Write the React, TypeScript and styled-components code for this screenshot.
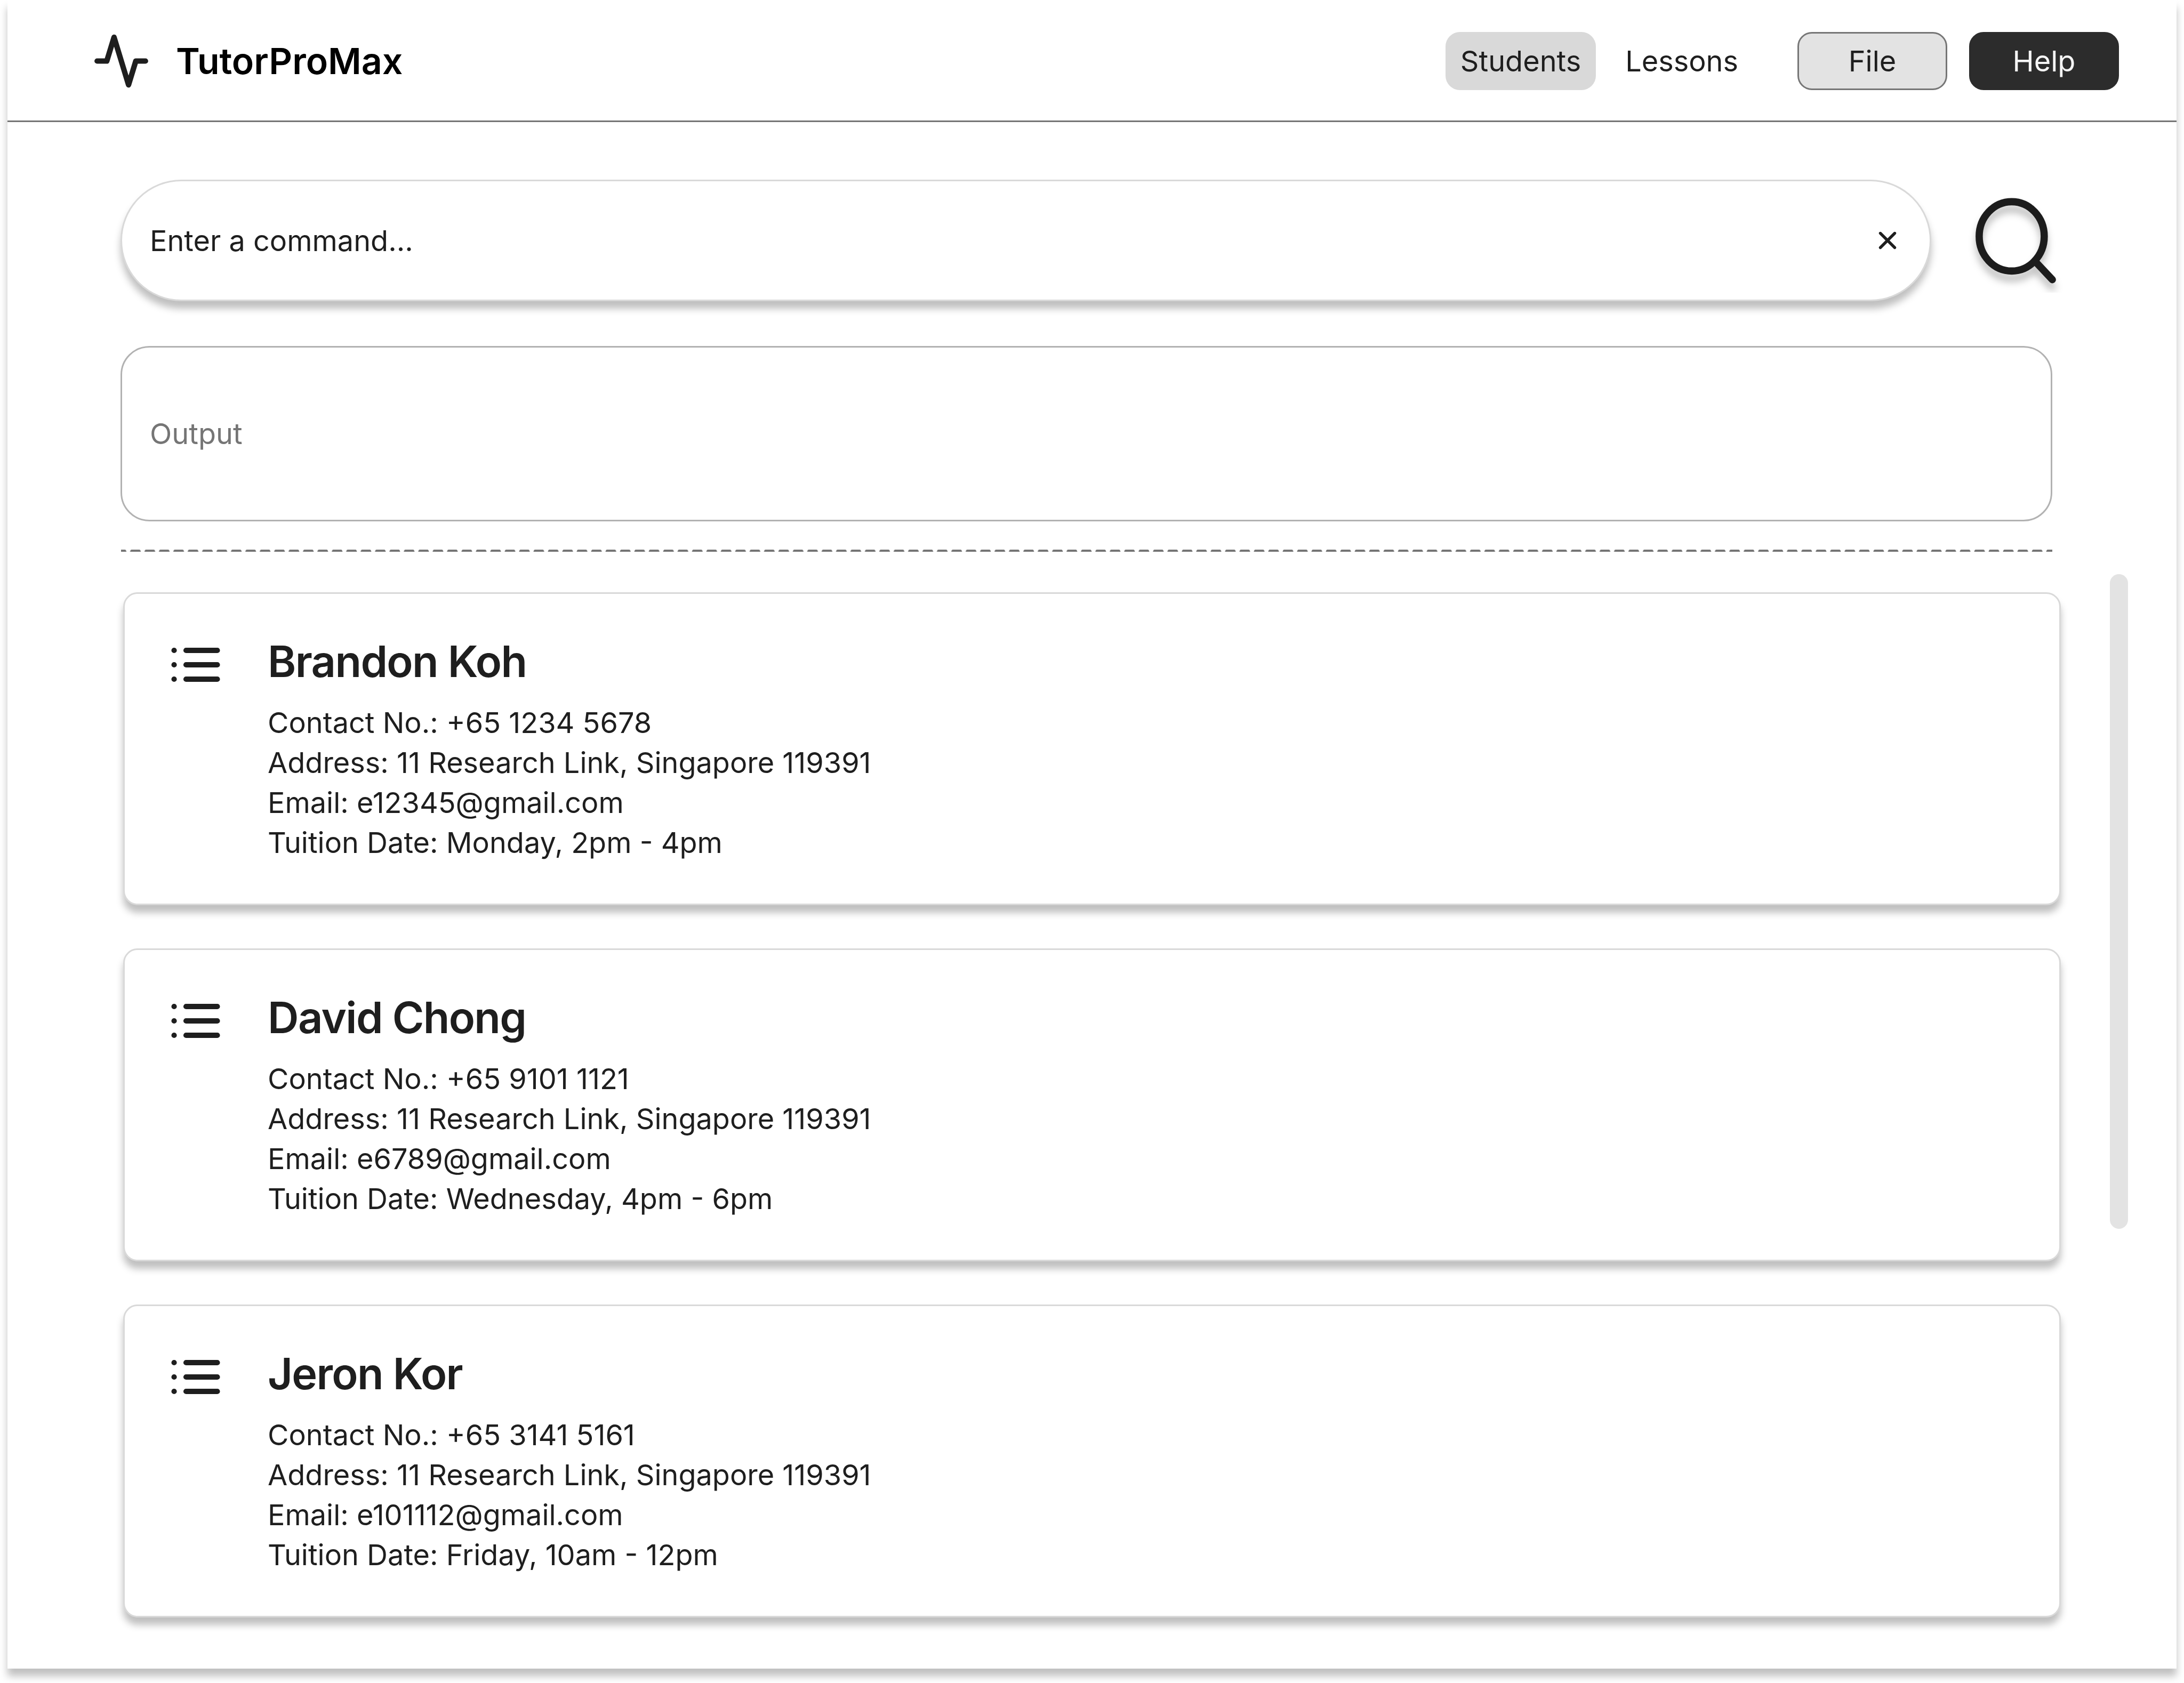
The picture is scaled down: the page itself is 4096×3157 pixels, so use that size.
import React from "react";
import styled, { createGlobalStyle, css } from "styled-components";

const ink = "#1e1e1e";
const line = "#d9d9d9";
const muted = "#757575";
const softShadow = "0 14px 14px rgba(0, 0, 0, 0.25)";

const GlobalStyle = createGlobalStyle`
  *, *::before, *::after { box-sizing: border-box; }
  body {
    margin: 0;
    background: #ffffff;
    color: ${ink};
    font-family: Inter, "Liberation Sans", sans-serif;
    font-size: 54px;
    line-height: 75px;
  }
  svg { display: block; flex: none; }
`;

const Page = styled.div`
  padding: 0 14px 27px;
`;

const Frame = styled.div`
  background: #ffffff;
  box-shadow: ${softShadow};
`;

const Header = styled.header`
  display: flex;
  align-items: center;
  justify-content: space-between;
  padding: 55px 108px 52px 159px;
  border-bottom: 3px solid ${muted};
`;

const Brand = styled.div`
  display: flex;
  align-items: center;
  gap: 48px;
  color: #000000;
  font-size: 68px;
  font-weight: 600;
`;

const Actions = styled.div`
  display: flex;
  align-items: center;
  gap: 83px;
`;

const Nav = styled.nav`
  display: flex;
  gap: 27px;
`;

const NavLink = styled.a<{ $active?: boolean }>`
  padding: 17px 28px;
  border-radius: 27px;
  background: ${({ $active }) => ($active ? line : "transparent")};
  color: ${ink};
  text-decoration: none;
`;

const ButtonGroup = styled.div`
  display: flex;
  gap: 41px;
`;

const HeaderButton = styled.button<{ $variant: "neutral" | "primary" }>`
  width: 281px;
  height: 109px;
  padding: 0;
  border-radius: 27px;
  font: inherit;
  ${({ $variant }) =>
    $variant === "neutral"
      ? css`
          border: 3px solid #767676;
          background: #e3e3e3;
          color: ${ink};
        `
      : css`
          border: 3px solid #2c2c2c;
          background: #2c2c2c;
          color: #f5f5f5;
        `}
`;

const CommandRow = styled.form`
  display: flex;
  align-items: center;
  gap: 67px;
  padding: 108px 210px 0 212px;
`;

const CommandBox = styled.div`
  display: flex;
  flex: 1;
  align-items: center;
  height: 228px;
  padding: 0 52px;
  border: 3px solid ${line};
  border-radius: 114px;
  background: #ffffff;
  box-shadow: ${softShadow};
`;

const CommandInput = styled.input`
  flex: 1;
  min-width: 0;
  padding: 0;
  border: 0;
  outline: 0;
  background: transparent;
  color: ${ink};
  font: inherit;
  &::placeholder {
    color: ${ink};
    opacity: 1;
  }
`;

const IconButton = styled.button`
  padding: 0;
  border: 0;
  background: transparent;
`;

const OutputBox = styled.output`
  display: flex;
  align-items: center;
  height: 329px;
  margin: 84px 233px 0 212px;
  padding: 0 52px;
  border: 3px solid #b2b2b2;
  border-radius: 54px;
  color: ${muted};
`;

const Divider = styled.div`
  margin: 53px 233px 42px 213px;
`;

const Results = styled.main`
  display: flex;
  align-items: flex-start;
  gap: 92px;
  padding: 0 91px 96px 217px;
`;

const StudentList = styled.ul`
  display: flex;
  flex: 1;
  flex-direction: column;
  gap: 81px;
  margin: 0;
  padding: 34px 0 0;
  list-style: none;
`;

const Card = styled.li`
  display: flex;
  align-items: flex-start;
  gap: 81px;
  padding: 79px 79px 77px;
  border: 3px solid ${line};
  border-radius: 27px;
  background: #ffffff;
  box-shadow: ${softShadow};
`;

const Name = styled.h2`
  margin: 0 0 28px;
  font-size: 81px;
  font-weight: 600;
  line-height: 97px;
  letter-spacing: -0.02em;
`;

const Detail = styled.p`
  margin: 0;
`;

const ScrollThumb = styled.div`
  width: 34px;
  height: 1228px;
  border-radius: 17px;
  background: #e3e3e3;
`;

const strokeProps = {
  fill: "none",
  stroke: ink,
  strokeLinecap: "round" as const,
  strokeLinejoin: "round" as const,
};

const PulseIcon = () => (
  <svg width="109" height="119" viewBox="0 0 128 140" aria-hidden="true">
    <path d="M117.3 70H96L80 122.5L48 17.5L32 70H10.7" strokeWidth="12" {...strokeProps} />
  </svg>
);

const ClearIcon = () => (
  <svg width="54" height="54" viewBox="0 0 16 16" aria-hidden="true">
    <path d="M12 4L4 12M4 4L12 12" strokeWidth="1.6" {...strokeProps} />
  </svg>
);

const SearchIcon = () => (
  <svg width="183" height="195" viewBox="0 0 216 230" aria-hidden="true">
    <defs>
      <filter id="search-shadow" x="-20%" y="-20%" width="140%" height="150%">
        <feDropShadow dx="0" dy="16" stdDeviation="8" floodColor="#000000" floodOpacity="0.25" />
      </filter>
    </defs>
    <g filter="url(#search-shadow)" strokeWidth="16" {...strokeProps}>
      <ellipse cx="99" cy="105.4" rx="72" ry="76.7" />
      <path d="M189 201.3L149.9 159.6" />
    </g>
  </svg>
);

const ListIcon = () => (
  <svg width="108" height="108" viewBox="0 0 24 24" aria-hidden="true">
    <path
      d="M8 6H21M8 12H21M8 18H21M3 6H3.01M3 12H3.01M3 18H3.01"
      strokeWidth="2.25"
      {...strokeProps}
    />
  </svg>
);

const DashedLine = () => (
  <svg width="100%" height="4" aria-hidden="true">
    <defs>
      <pattern id="dash" width="27.02" height="4" patternUnits="userSpaceOnUse">
        <path d="M0 0H8Q9.6 1 10.2 4H0ZM27.02 0H19Q17.4 1 16.8 4H27.02Z" fill={muted} />
      </pattern>
    </defs>
    <rect width="100%" height="4" fill="url(#dash)" />
  </svg>
);

const students = [
  {
    name: "Brandon Koh",
    contact: "+65 1234 5678",
    address: "11 Research Link, Singapore 119391",
    email: "e12345@gmail.com",
    tuition: "Monday, 2pm - 4pm",
  },
  {
    name: "David Chong",
    contact: "+65 9101 1121",
    address: "11 Research Link, Singapore 119391",
    email: "e6789@gmail.com",
    tuition: "Wednesday, 4pm - 6pm",
  },
  {
    name: "Jeron Kor",
    contact: "+65 3141 5161",
    address: "11 Research Link, Singapore 119391",
    email: "e101112@gmail.com",
    tuition: "Friday, 10am - 12pm",
  },
];

export default function App() {
  return (
    <>
      <GlobalStyle />
      <Page>
        <Frame>
          <Header>
            <Brand>
              <PulseIcon />
              <span>TutorProMax</span>
            </Brand>
            <Actions>
              <Nav>
                <NavLink href="#students" $active aria-current="page">
                  Students
                </NavLink>
                <NavLink href="#lessons">Lessons</NavLink>
              </Nav>
              <ButtonGroup>
                <HeaderButton type="button" $variant="neutral">
                  File
                </HeaderButton>
                <HeaderButton type="button" $variant="primary">
                  Help
                </HeaderButton>
              </ButtonGroup>
            </Actions>
          </Header>

          <CommandRow onSubmit={(event) => event.preventDefault()}>
            <CommandBox>
              <CommandInput id="command" type="text" aria-label="Command" placeholder="Enter a command..." />
              <IconButton type="reset" aria-label="Clear command">
                <ClearIcon />
              </IconButton>
            </CommandBox>
            <IconButton type="submit" aria-label="Run command">
              <SearchIcon />
            </IconButton>
          </CommandRow>

          <OutputBox htmlFor="command">Output</OutputBox>

          <Divider role="separator">
            <DashedLine />
          </Divider>

          <Results>
            <StudentList>
              {students.map((student) => (
                <Card key={student.name}>
                  <ListIcon />
                  <div>
                    <Name>{student.name}</Name>
                    <Detail>Contact No.: {student.contact}</Detail>
                    <Detail>Address: {student.address}</Detail>
                    <Detail>Email: {student.email}</Detail>
                    <Detail>Tuition Date: {student.tuition}</Detail>
                  </div>
                </Card>
              ))}
            </StudentList>
            <ScrollThumb />
          </Results>
        </Frame>
      </Page>
    </>
  );
}
